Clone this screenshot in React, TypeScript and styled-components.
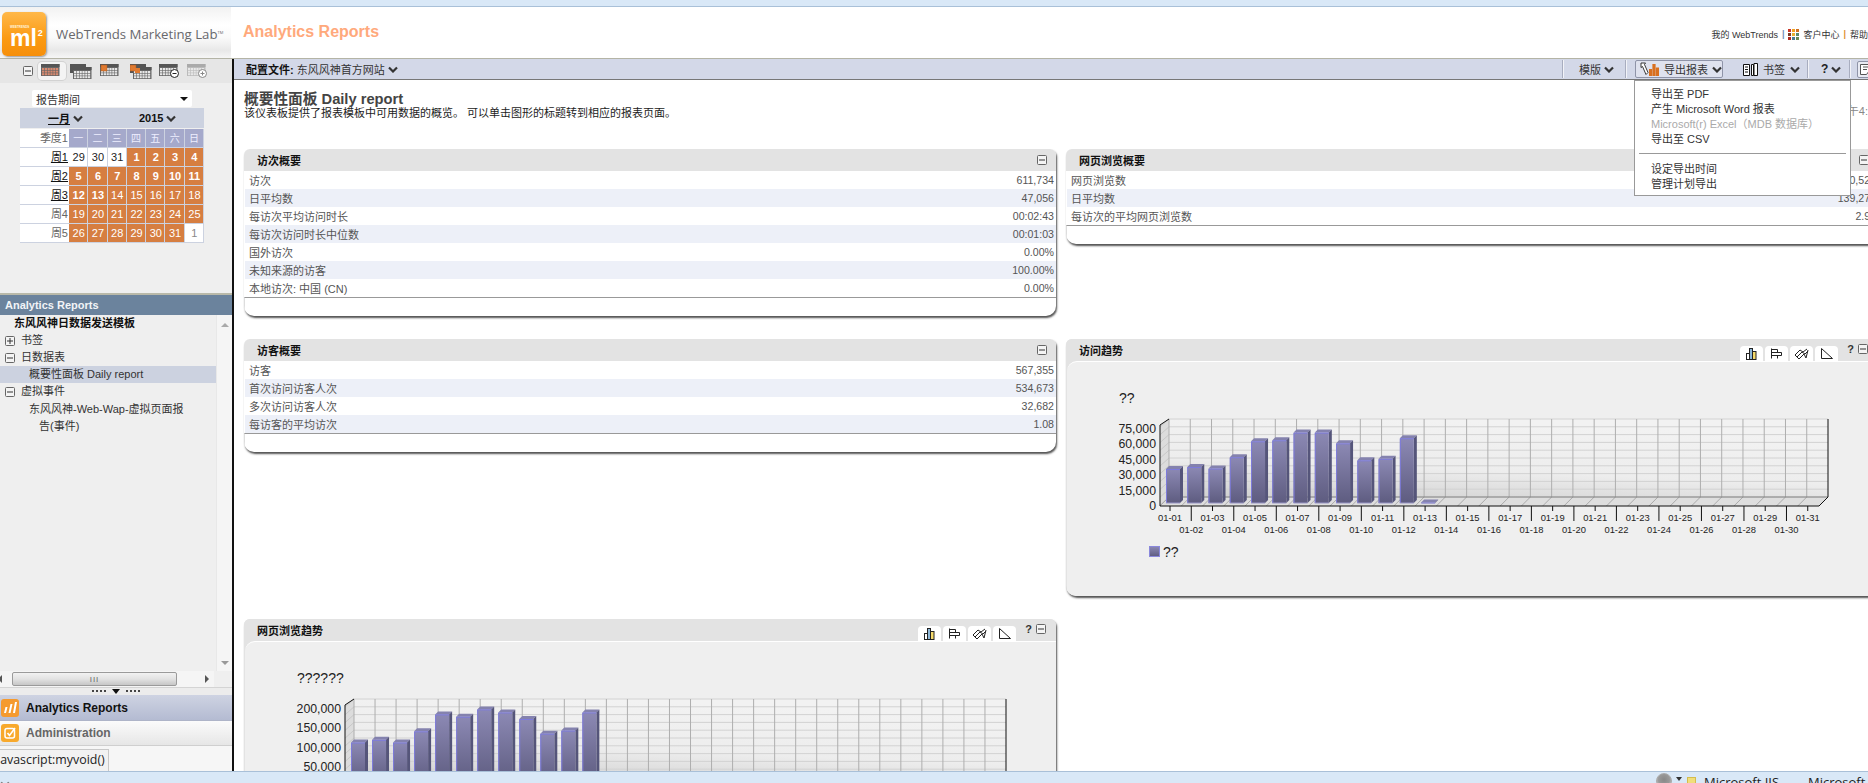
import React from "react";
import styled, { createGlobalStyle } from "styled-components";

const SANS = `"Liberation Sans", "Noto Sans CJK SC", sans-serif`;

const GlobalStyle = createGlobalStyle`
    html, body {
        margin: 0;
        height: 100%;
        overflow: hidden;
        background: #fff;
        font-family: ${SANS};
    }
`;

const Shell = styled.div`
    width: 1868px;
    height: 783px;
    display: flex;
    flex-direction: column;
    overflow: hidden;
`;
const TopStrip = styled.div`
    height: 6px;
    flex: none;
    background: #d9e8f7;
    border-bottom: 1px solid #a9c0d8;
`;
const Header = styled.header`
    height: 51px;
    flex: none;
    display: flex;
    align-items: center;
    border-bottom: 1px solid #b4b4a6;
`;
const LogoArea = styled.div`
    width: 231px;
    height: 100%;
    flex: none;
    display: flex;
    align-items: center;
    gap: 10px;
    padding: 2px 0 0 2px;
    box-sizing: border-box;
    background: linear-gradient(#f2f2f2 0, #fff 35%, #fafafa 60%, #e8e8e8 85%, #f6f6f6 100%);
`;
const LogoBadge = styled.div`
    width: 44px;
    height: 44px;
    flex: none;
    border-radius: 5px;
    background: linear-gradient(#ffb84a, #fb9a12 60%, #f68f0a);
    box-shadow: 1px 1px 2px #999;
    color: #fff;
    padding: 13px 0 0 8px;
    box-sizing: border-box;
`;
const LogoTiny = styled.div`
    font: bold 3px/4px ${SANS};
    color: #fff3dc;
`;
const LogoMark = styled.div`
    font: bold 23px/19px ${SANS};
    white-space: nowrap;
`;
const LogoSquared = styled.span`
    font: bold 9px/9px ${SANS};
    vertical-align: 10px;
    margin-left: 1px;
`;
const LogoWords = styled.div`
    font: 13.2px "Open Sans", sans-serif;
    color: #68686c;
    white-space: nowrap;
`;
const LogoTm = styled.span`
    font-size: 4px;
    vertical-align: 5px;
`;
const AppTitle = styled.h1`
    margin: 0 0 2px 12px;
    font: bold 16px ${SANS};
    color: #ffa97c;
`;
const HeaderLinks = styled.nav`
    margin-left: auto;
    display: flex;
    align-items: center;
    gap: 4px;
    font-size: 9px;
    color: #333;
    white-space: nowrap;
    padding-top: 3px;
`;
const LinkBar = styled.span<{ $color: string }>`
    color: ${(p) => p.$color};
    font-weight: bold;
`;

const Body = styled.div`
    flex: 1;
    min-height: 0;
    display: flex;
`;
const LeftPanel = styled.aside`
    position: relative;
    width: 232px;
    flex: none;
    display: flex;
    flex-direction: column;
    background: #efefef;
    border-right: 2px solid #111;
`;
const CalTools = styled.div`
    height: 24px;
    flex: none;
    display: flex;
    align-items: center;
    padding-left: 23px;
    background: #e6e6e6;
`;
const CalToolSlot = styled.span<{ $active?: boolean; $width: number }>`
    width: ${(p) => p.$width}px;
    height: 18px;
    flex: none;
    display: flex;
    align-items: center;
    justify-content: center;
    border-radius: 4px;
    &:first-of-type {
        margin-left: 5px;
    }
    ${(p) => p.$active && "background: #f4f4f4; box-shadow: 0 0 0 1px #d2d2d2;"}
`;
const PeriodSelect = styled.div`
    width: 160px;
    height: 17px;
    margin: 7px 0 0 32px;
    padding: 0 4px;
    box-sizing: border-box;
    display: flex;
    align-items: center;
    justify-content: space-between;
    background: #fff;
    border-radius: 2px;
    font-size: 11px;
    color: #333;
    flex: none;
`;
const SelectCaret = styled.span`
    border: 4px solid transparent;
    border-top: 4px solid #111;
    border-bottom: 0;
`;
const MonthBar = styled.div`
    width: 184px;
    height: 20px;
    margin: 1px 0 0 20px;
    flex: none;
    display: grid;
    grid-template-columns: 119px 1fr;
    align-items: center;
    background: #ccd2e0;
    font-size: 11px;
    font-weight: bold;
    color: #111;
`;
const MonthCell = styled.span<{ $left: number }>`
    display: flex;
    align-items: center;
    gap: 3px;
    padding-left: ${(p) => p.$left}px;
`;
const MonthName = styled.span`
    text-decoration: underline;
`;
const CalGrid = styled.div`
    width: 184px;
    margin: 1px 0 0 20px;
    flex: none;
    display: grid;
    grid-template-columns: 49px repeat(7, 19.3px);
    grid-auto-rows: 19px;
    background: #ccd2e0;
`;
const WeekLabel = styled.span<{ $link?: boolean }>`
    background: #fff;
    border-bottom: 1px solid #ccd2e0;
    box-sizing: border-box;
    font-size: 11px;
    line-height: 19px;
    text-align: right;
    padding-right: 1px;
    color: ${(p) => (p.$link ? "#111" : "#666")};
    text-decoration: ${(p) => (p.$link ? "underline" : "none")};
`;
const WeekDay = styled.span`
    background: #a5a9cb;
    border-right: 1px solid #ccd2e0;
    border-bottom: 1px solid #ccd2e0;
    box-sizing: border-box;
    color: #eef;
    font-size: 10px;
    line-height: 19px;
    text-align: center;
`;
const DayCell = styled.span<{ $kind: "in" | "strong" | "out" | "faint" }>`
    background: ${(p) => (p.$kind === "in" || p.$kind === "strong" ? "#d67e41" : "#fff")};
    color: ${(p) =>
        p.$kind === "out" ? "#222" : p.$kind === "faint" ? "#888" : "#fff"};
    font-weight: ${(p) => (p.$kind === "strong" ? "bold" : "normal")};
    border-right: 1px solid #ccd2e0;
    border-bottom: 1px solid #ccd2e0;
    box-sizing: border-box;
    font-size: 11px;
    line-height: 19px;
    text-align: center;
    padding-left: 1px;
`;
const PanelHeading = styled.div`
    margin-top: 50px;
    height: 20px;
    flex: none;
    border-top: 2px solid #b9b9a9;
    background: #6b839d;
    color: #f2f4f7;
    font-size: 11px;
    font-weight: bold;
    line-height: 20px;
    padding-left: 5px;
`;
const TreeBox = styled.div`
    flex: 1;
    min-height: 0;
    display: flex;
`;
const TreeList = styled.div`
    flex: 1;
    font-size: 11px;
    line-height: 17px;
    color: #333;
`;
const TreeRow = styled.div<{ $indent: number; $selected?: boolean; $bold?: boolean }>`
    height: 17px;
    display: flex;
    align-items: center;
    gap: 6px;
    padding-left: ${(p) => p.$indent}px;
    background: ${(p) => (p.$selected ? "#ccd2e0" : "transparent")};
    font-weight: ${(p) => (p.$bold ? "bold" : "normal")};
    color: ${(p) => (p.$bold ? "#111" : "#333")};
`;
const TreeWrapRow = styled.div`
    padding: 1px 25px 0 39px;
    text-indent: -10px;
`;
const VScroll = styled.div`
    width: 16px;
    flex: none;
    display: flex;
    flex-direction: column;
    align-items: center;
    justify-content: space-between;
    padding: 8px 0 6px;
    box-sizing: border-box;
    background: #f5f5f5;
    border-left: 1px solid #e8e8e8;
`;
const ArrowUp = styled.span`
    border: 4px solid transparent;
    border-bottom: 4px solid #aaa;
    border-top: 0;
`;
const ArrowDown = styled.span`
    border: 4px solid transparent;
    border-top: 4px solid #999;
    border-bottom: 0;
`;
const HScroll = styled.div`
    height: 16px;
    flex: none;
    width: 214px;
    display: flex;
    align-items: center;
    background: #f5f5f5;
`;
const ArrowLeft = styled.span`
    border: 4px solid transparent;
    border-right: 4px solid #555;
    border-left: 0;
    margin-left: -2px;
`;
const ArrowRight = styled.span`
    border: 4px solid transparent;
    border-left: 4px solid #555;
    border-right: 0;
    margin-left: 28px;
`;
const HThumb = styled.div`
    width: 165px;
    height: 14px;
    margin-left: 10px;
    box-sizing: border-box;
    display: flex;
    align-items: center;
    justify-content: center;
    border: 1px solid #9a9a9a;
    border-radius: 2px;
    background: linear-gradient(#f2f2f2, #e2e2e2 50%, #c6c6c6);
    color: #666;
    font-size: 8px;
    letter-spacing: 1px;
`;
const Resizer = styled.div`
    height: 8px;
    flex: none;
    display: flex;
    align-items: center;
    justify-content: center;
    gap: 6px;
    background: #ececec;
    border-top: 1px solid #d4d4d4;
    box-sizing: border-box;
`;
const GripDots = styled.span`
    width: 14px;
    height: 1px;
    border-top: 2px dotted #444;
`;
const ResizeCaret = styled.span`
    border: 4px solid transparent;
    border-top: 5px solid #111;
    border-bottom: 0;
`;
const NavTab = styled.div<{ $active?: boolean }>`
    height: ${(p) => (p.$active ? 26 : 25)}px;
    flex: none;
    display: flex;
    align-items: center;
    gap: 7px;
    padding-left: 1px;
    box-sizing: border-box;
    border-bottom: 1px solid ${(p) => (p.$active ? "#aeb4c8" : "#cfcfcf")};
    background: ${(p) =>
        p.$active
            ? "linear-gradient(#ced3e2, #b4bbd2)"
            : "linear-gradient(#fbfbfb, #e6e6e6)"};
    font-size: 12px;
    font-weight: bold;
    color: ${(p) => (p.$active ? "#111" : "#666")};
`;
const NavFiller = styled.div`
    height: 25px;
    flex: none;
    background: #f6f6f6;
`;
const StatusTip = styled.div`
    position: absolute;
    left: 0;
    bottom: 0;
    width: 109px;
    height: 22px;
    box-sizing: border-box;
    overflow: hidden;
    background: #f2f2f2;
    border: 1px solid #c8c8c8;
    border-left: 0;
    border-bottom: 0;
    font: 12.4px/20px "Open Sans", sans-serif;
    color: #222;
    white-space: nowrap;
    text-indent: -3px;
`;

const Main = styled.main`
    position: relative;
    flex: 1;
    min-width: 0;
    overflow: hidden;
`;
const Toolbar = styled.div`
    height: 20px;
    display: flex;
    align-items: center;
    background: #d3d8e8;
    border-bottom: 1px solid #777;
    font-size: 11px;
    color: #333;
    padding-left: 12px;
`;
const ProfileName = styled.b`
    color: #111;
    margin-right: 3px;
`;
const ToolRight = styled.div`
    margin-left: auto;
    display: flex;
    height: 100%;
    align-items: center;
`;
const ToolGroup = styled.div<{ $width: number; $pad: number }>`
    width: ${(p) => p.$width}px;
    height: 18px;
    box-sizing: border-box;
    display: flex;
    align-items: center;
    gap: 3px;
    padding-left: ${(p) => p.$pad}px;
    border-left: 1px solid #f2f3f8;
    box-shadow: -1px 0 0 #a8adbf;
`;
const ExportButton = styled.button`
    width: 88px;
    height: 18px;
    padding: 0 0 0 4px;
    display: flex;
    align-items: center;
    gap: 4px;
    font: 11px ${SANS};
    color: #333;
    background: #dfe2ee;
    border: 1px solid #8f94a8;
    border-radius: 2px;
    flex: none;
`;
const BookItem = styled.div`
    margin-left: 17px;
    display: flex;
    align-items: center;
    gap: 5px;
`;
const Help = styled.b`
    font-size: 12px;
    color: #222;
`;
const EdgeButton = styled.span`
    width: 22px;
    height: 17px;
    margin-left: -1px;
    padding: 2px 0 0 2px;
    flex: none;
    background: #e9ebf3;
    border: 1px solid #8f94a8;
    border-radius: 2px;
    box-sizing: border-box;
`;
const ExportMenu = styled.div`
    position: absolute;
    top: 21px;
    right: 17px;
    width: 217px;
    height: 116px;
    box-sizing: border-box;
    padding: 6px 4px 0;
    background: #fff;
    border: 1px solid #999;
    z-index: 5;
    font-size: 11px;
    line-height: 15px;
    color: #333;
`;
const MenuItem = styled.div<{ $disabled?: boolean }>`
    padding-left: 12px;
    color: ${(p) => (p.$disabled ? "#aaa" : "#333")};
`;
const MenuRule = styled.hr`
    margin: 6px 0 8px;
    border: 0;
    border-top: 1px solid #999;
`;
const Content = styled.div`
    padding: 11px 0 0 10px;
`;
const TitleRow = styled.div`
    display: flex;
    align-items: flex-end;
    justify-content: space-between;
`;
const TitleBlock = styled.div``;
const PageTitle = styled.h2`
    margin: 0;
    font: bold 14.7px/17px ${SANS};
    color: #444;
`;
const PageDesc = styled.p`
    margin: 0;
    font-size: 11px;
    line-height: 11px;
    color: #222;
`;
const ReportTime = styled.span`
    font-size: 11px;
    line-height: 11px;
    color: #888;
    margin-bottom: 2px;
`;
const CardGrid = styled.div`
    margin-top: 30px;
    display: grid;
    grid-template-columns: 812px 812px;
    column-gap: 10px;
    row-gap: 23px;
    align-items: start;
`;
const Card = styled.section`
    border-radius: 6px 6px 10px 10px;
    background: #fff;
    box-shadow: 1px 2px 2px rgba(40, 40, 40, 0.8);
    overflow: hidden;
`;
const CardHead = styled.div`
    height: 22px;
    display: flex;
    align-items: center;
    padding: 0 9px 0 13px;
    background: #e3e3e3;
    font-size: 11px;
    font-weight: bold;
    color: #111;
`;
const CardHeadEnd = styled.span`
    margin-left: auto;
    display: flex;
    align-items: center;
`;
const DataRow = styled.div<{ $alt: boolean }>`
    height: 18px;
    display: flex;
    align-items: center;
    justify-content: space-between;
    padding: 0 2px 0 4px;
    margin-left: 1px;
    background: ${(p) => (p.$alt ? "#edf0f8" : "#fff")};
    font-size: 11px;
    color: #555;
`;
const DataValue = styled.span`
    font-size: 10.6px;
`;
const CardFoot = styled.div`
    height: 18px;
    border-top: 1px solid #999;
    border-left: 1px solid #ddd;
`;
const ChartCard = styled(Card)`
    background: #e3e3e3;
`;
const ChartHeadEnd = styled.span`
    margin-left: auto;
    align-self: stretch;
    display: flex;
    align-items: flex-end;
    gap: 2px;
    padding-top: 7px;
    box-sizing: border-box;
`;
const ChartTab = styled.span`
    width: 23px;
    height: 15px;
    display: flex;
    align-items: center;
    justify-content: center;
    background: #fff;
    border-radius: 4px 4px 0 0;
`;
const ChartHelp = styled.span`
    align-self: flex-start;
    margin: -3px 1px 0 7px;
    display: flex;
    align-items: center;
    gap: 4px;
    font-size: 11px;
    color: #333;
`;
const ChartBody = styled.div<{ $height: number }>`
    height: ${(p) => p.$height}px;
    background: #efefef;
    border-top: 1px solid #fff;
    box-sizing: border-box;
    border-radius: 10px 0 0 0;
    margin-left: 1px;
`;
const ChartSvg = styled.svg`
    display: block;
    margin-top: -1px;
`;
const ChartCaption = styled.text`
    font: 14px ${SANS};
    fill: #222;
`;
const AxisLabel = styled.text`
    font: 12.3px ${SANS};
    fill: #222;
    text-anchor: end;
`;
const DateLabel = styled.text`
    font: 9.4px ${SANS};
    fill: #222;
    text-anchor: middle;
`;
const BottomBar = styled.footer`
    position: relative;
    height: 12px;
    flex: none;
    overflow: hidden;
    box-sizing: border-box;
    border-top: 1px solid #a9c0d8;
    background: #d9e8f7;
    display: flex;
    font: 13px/16px "Open Sans", sans-serif;
    color: #222;
`;
const BarLead = styled.span`
    padding-top: 3px;
`;
const BarRight = styled.div`
    margin-left: auto;
    display: flex;
    align-items: flex-start;
`;
const BarGlobe = styled.span`
    width: 16px;
    height: 16px;
    border-radius: 50%;
    background: radial-gradient(circle at 50% 40%, #888, #999 50%, #ddd);
    border: 1px solid #aaa;
    box-sizing: border-box;
    margin-top: 1px;
`;
const BarCaret = styled.span`
    margin: 5px 5px 0 4px;
    border: 3px solid transparent;
    border-top: 4px solid #333;
    border-bottom: 0;
`;
const BarNote = styled.span`
    width: 9px;
    height: 10px;
    margin-top: 5px;
    background: #f0de7a;
    border: 1px solid #d4bc4e;
    box-sizing: border-box;
`;
const BarItem = styled.span<{ $left: number; $width: number }>`
    margin-left: ${(p) => p.$left}px;
    width: ${(p) => p.$width}px;
    margin-top: 2px;
    white-space: nowrap;
`;

const Chevron = ({ color = "#333" }: { color?: string }) => (
    <svg width="10" height="7" viewBox="0 0 10 7">
        <polyline points="1,1.5 5,5.5 9,1.5" fill="none" stroke={color} strokeWidth="2.2" />
    </svg>
);

const BoxIcon = ({ plus }: { plus?: boolean }) => (
    <svg width="10" height="10" viewBox="0 0 10 10">
        <rect x="0.5" y="0.5" width="9" height="9" rx="1" fill="#f4f4f4" stroke="#666" />
        <line x1="2" y1="5" x2="8" y2="5" stroke="#333" />
        {plus && <line x1="5" y1="2" x2="5" y2="8" stroke="#333" />}
    </svg>
);

const CalIcon = ({
    cells = "#e8e8e8",
    back,
    flag,
    badge,
    faded
}: {
    cells?: string;
    back?: boolean;
    flag?: number;
    badge?: "minus" | "plus";
    faded?: boolean;
}) => {
    const top = faded ? "#aaa" : "#555";
    const ox = back ? 3 : 0;
    const oy = back ? 3 : 0;
    const squares = [];
    for (let r = 0; r < 3; r++) {
        for (let c = 0; c < 6; c++) {
            squares.push(
                <rect key={`${r}-${c}`} x={ox + 1 + c * 2.8} y={oy + 4 + r * 2.6} width="2.2" height="2" fill={cells} />
            );
        }
    }
    return (
        <svg width="22" height="15" viewBox="0 0 22 15">
            {back && <rect x="0" y="0" width="16" height="9" fill={top} />}
            <rect x={ox} y={oy} width="18.5" height="12" fill={faded ? "#bbb" : "#666"} />
            <rect x={ox} y={oy} width="18.5" height="3" fill={top} />
            {squares}
            {flag !== undefined && <rect x={flag} y="1" width="6" height="6" fill="#e07a30" stroke="#a85a20" strokeWidth="0.5" />}
            {back && flag !== undefined && <rect x={flag + 5} y="4" width="5" height="5" fill="#e07a30" />}
            {badge && (
                <g>
                    <circle cx="15.5" cy="9.5" r="4" fill="#fff" stroke={badge === "minus" ? "#222" : "#888"} />
                    <line x1="13.5" y1="9.5" x2="17.5" y2="9.5" stroke={badge === "minus" ? "#222" : "#888"} />
                    {badge === "plus" && <line x1="15.5" y1="7.5" x2="15.5" y2="11.5" stroke="#888" />}
                </g>
            )}
        </svg>
    );
};

const ReportsIcon = () => (
    <svg width="18" height="18" viewBox="0 0 18 18">
        <rect width="18" height="18" rx="3" fill="#f59a2e" />
        <path d="M3 14l1.5-6h2L5 14zM7.5 14L9.5 5h2l-2 9zM12 14l2-11h2l-2 11z" fill="#fff" />
    </svg>
);

const AdminIcon = () => (
    <svg width="18" height="18" viewBox="0 0 18 18">
        <rect width="18" height="18" rx="3" fill="#f8a92c" />
        <rect x="4" y="4.5" width="9.5" height="9.5" rx="2" fill="none" stroke="#fff" strokeWidth="1.5" />
        <polyline points="6.5,9 8.5,11.5 14,4" fill="none" stroke="#fff" strokeWidth="1.6" />
    </svg>
);

const ExportIcon = () => (
    <svg width="20" height="14" viewBox="0 0 20 14">
        <path d="M1 1h4.5l-1 1.5 3.5 8-2 2-3.5-8-1.5 1z" fill="#fff" stroke="#222" strokeWidth="0.9" />
        <rect x="9" y="7" width="3.2" height="7" fill="#d9701f" />
        <rect x="12.4" y="2" width="3.2" height="12" fill="#d9701f" />
        <rect x="15.8" y="5.5" width="3.2" height="8.5" fill="#d9701f" />
    </svg>
);

const BookIcon = () => (
    <svg width="15" height="13" viewBox="0 0 15 13">
        <path d="M.5 1.5h6v11h-6zM8.5 1.5h2v11h-2zM11 .5h3.5v12H11z" fill="#fff" stroke="#111" />
        <path d="M2 4h3M2 6.5h3M2 9h3" stroke="#111" />
    </svg>
);

const EdgeIcon = () => (
    <svg width="10" height="11" viewBox="0 0 10 11">
        <path d="M.5.5h9v6l-3 4h-6z" fill="#fff" stroke="#555" />
        <path d="M3 3h6M3 5.5h4" stroke="#555" />
    </svg>
);

const GridLogo = () => {
    const colors = ["#c8382a", "#f0a020", "#d07020", "#7a3a2a", "#e8b030", "#5a8a70", "#b02a20", "#4a7a90", "#6a8a50"];
    return (
        <svg width="11" height="11" viewBox="0 0 11 11">
            {colors.map((fill, i) => (
                <rect key={fill} x={(i % 3) * 4} y={Math.floor(i / 3) * 4} width="3" height="3" fill={fill} />
            ))}
        </svg>
    );
};

const TabBars = () => (
    <svg width="11" height="12" viewBox="0 0 11 12">
        <rect x=".5" y="5.5" width="3" height="6" fill="#fff" stroke="#222" />
        <rect x="3.5" y=".5" width="3" height="11" fill="#8fb8d8" stroke="#222" />
        <rect x="6.5" y="3.5" width="3.5" height="8" fill="#f4d96a" stroke="#222" />
    </svg>
);
const TabHBars = () => (
    <svg width="11" height="11" viewBox="0 0 11 11">
        <path d="M.5.5v10M.5 1.5h6v3h-6M.5 4.5h10v3H.5M.5 7.5h6v3" fill="none" stroke="#222" />
    </svg>
);
const TabWave = () => (
    <svg width="15" height="12" viewBox="0 0 15 12">
        <path d="M1 7l5-5 3 2 4-3M3 9l5-5 3 2 3-3M5 11l5-5 2 4 2-8M1 7l4 4" fill="none" stroke="#222" />
    </svg>
);
const TabArea = () => (
    <svg width="12" height="11" viewBox="0 0 12 11">
        <path d="M.5.5v10h11z" fill="#fff" stroke="#222" />
    </svg>
);

const ChartTabs = () => (
    <ChartHeadEnd>
        <ChartTab><TabBars /></ChartTab>
        <ChartTab><TabHBars /></ChartTab>
        <ChartTab><TabWave /></ChartTab>
        <ChartTab><TabArea /></ChartTab>
        <ChartHelp><b>?</b><BoxIcon /></ChartHelp>
    </ChartHeadEnd>
);

const RIGHT_WALL = 761;
const WALL_TOP = 58;
const WALL_BOTTOM = 136;
const FRONT_BOTTOM = 145;

type TrendProps = {
    id: string;
    caption: string;
    axisX: number;
    axisLabels: string[];
    max: number;
    values: number[];
    legend?: string;
    height: number;
};

const TrendChart = ({ id, caption, axisX, axisLabels, max, values, legend, height }: TrendProps) => {
    const backLeft = axisX + 9;
    const frontRight = RIGHT_WALL - 9;
    const step = (RIGHT_WALL - backLeft) / 31;
    const labelStep = 77 / (axisLabels.length - 1);
    const grid = Array.from({ length: 11 }, (_, i) => WALL_TOP + i * 7.8);
    const days = Array.from({ length: 31 }, (_, i) => i);
    return (
        <ChartSvg width="810" height={height}>
            <defs>
                <linearGradient id={`${id}-wall`} x1="0" y1="1" x2="0.35" y2="0">
                    <stop offset="0" stopColor="#cfcfcf" />
                    <stop offset="0.45" stopColor="#ededed" />
                    <stop offset="1" stopColor="#f2f2f2" />
                </linearGradient>
                <linearGradient id={`${id}-bar`} x1="0" y1="0" x2="0" y2="1">
                    <stop offset="0" stopColor="#8c89b4" />
                    <stop offset="1" stopColor="#5e5c80" />
                </linearGradient>
            </defs>
            <ChartCaption x="52" y="42">{caption}</ChartCaption>
            <polygon
                points={`${axisX},${WALL_TOP + 6} ${backLeft},${WALL_TOP} ${backLeft},${WALL_BOTTOM} ${axisX},${FRONT_BOTTOM}`}
                fill="#dcdcdc"
            />
            <rect x={backLeft} y={WALL_TOP} width={RIGHT_WALL - backLeft} height={WALL_BOTTOM - WALL_TOP} fill={`url(#${id}-wall)`} />
            <polygon
                points={`${axisX},${FRONT_BOTTOM} ${backLeft},${WALL_BOTTOM} ${RIGHT_WALL},${WALL_BOTTOM} ${frontRight},${FRONT_BOTTOM}`}
                fill="#dedede"
            />
            {grid.map((y) => (
                <g key={y}>
                    <line x1={backLeft} y1={y} x2={RIGHT_WALL} y2={y} stroke="#d2d2d2" />
                    <line x1={axisX} y1={y + 8} x2={backLeft} y2={y} stroke="#c8c8c8" />
                </g>
            ))}
            {days.map((k) => (
                <g key={k}>
                    <line x1={backLeft + k * step} y1={WALL_TOP} x2={backLeft + k * step} y2={WALL_BOTTOM} stroke="#aeaeae" />
                    <line
                        x1={axisX + k * step}
                        y1={FRONT_BOTTOM}
                        x2={backLeft + k * step}
                        y2={WALL_BOTTOM}
                        stroke="#aaa"
                    />
                </g>
            ))}
            <line x1={backLeft} y1={WALL_BOTTOM} x2={RIGHT_WALL} y2={WALL_BOTTOM} stroke="#808080" />
            {values.map((v, k) => {
                const x = axisX + 6 + k * step;
                const top = FRONT_BOTTOM - (v / max) * 77;
                return (
                    <g key={k}>
                        <polygon points={`${x},${top} ${x + 3},${top - 3} ${x + 17},${top - 3} ${x + 14},${top}`} fill="#8482ae" />
                        <polygon points={`${x + 14},${top} ${x + 17},${top - 3} ${x + 17},139 ${x + 14},142`} fill="#55557a" />
                        <rect x={x} y={top} width="14" height={142 - top} fill={`url(#${id}-bar)`} />
                        <path d={`M${x + 0.5} 142V${top + 0.5}H${x + 14}`} fill="none" stroke="#7d7bdc" />
                        <line x1={x} y1="142" x2={x + 14} y2="142" stroke="#9a98c8" />
                    </g>
                );
            })}
            <path
                d={`M${backLeft} ${WALL_TOP}L${axisX} ${WALL_TOP + 6}V${FRONT_BOTTOM}H${frontRight}L${RIGHT_WALL} ${WALL_BOTTOM}V${WALL_TOP}`}
                fill="none"
                stroke="#111"
            />
            {axisLabels.map((label, i) => (
                <AxisLabel key={label} x={axisX - 4} y={FRONT_BOTTOM - (axisLabels.length - 1 - i) * labelStep + 4}>
                    {label}
                </AxisLabel>
            ))}
            {days.map((k) => {
                const x = axisX + 10 + k * step;
                const even = k % 2 === 0;
                return (
                    <g key={k}>
                        <line x1={x} y1={FRONT_BOTTOM} x2={x} y2={even ? 150 : 160} stroke="#111" />
                        <DateLabel x={x} y={even ? 160 : 172}>
                            {`01-${String(k + 1).padStart(2, "0")}`}
                        </DateLabel>
                    </g>
                );
            })}
            {legend && (
                <g>
                    <rect x={axisX - 10.5} y="185.5" width="10" height="10" fill={`url(#${id}-bar)`} stroke="#8a88dc" />
                    <ChartCaption x={axisX + 3} y="196">{legend}</ChartCaption>
                </g>
            )}
        </ChartSvg>
    );
};

const VISITS = [
    ["访次", "611,734"],
    ["日平均数", "47,056"],
    ["每访次平均访问时长", "00:02:43"],
    ["每访次访问时长中位数", "00:01:03"],
    ["国外访次", "0.00%"],
    ["未知来源的访客", "100.00%"],
    ["本地访次: 中国 (CN)", "0.00%"]
];
const PAGE_VIEWS = [
    ["网页浏览数", "1,810,523"],
    ["日平均数", "139,271"],
    ["每访次的平均网页浏览数", "2.96"]
];
const VISITORS = [
    ["访客", "567,355"],
    ["首次访问访客人次", "534,673"],
    ["多次访问访客人次", "32,682"],
    ["每访客的平均访次", "1.08"]
];
const VISIT_TREND = [36000, 38000, 36500, 47500, 63000, 64000, 71500, 71500, 61000, 44500, 46000, 66000, 3500];
const VIEW_TREND = [113000, 120000, 113000, 142000, 186000, 180000, 199000, 191000, 174000, 136000, 144000, 191000];
const WEEKDAYS = ["一", "二", "三", "四", "五", "六", "日"];
const WEEKS: [string, boolean, number[]][] = [
    ["周1", true, [29, 30, 31, 1, 2, 3, 4]],
    ["周2", true, [5, 6, 7, 8, 9, 10, 11]],
    ["周3", true, [12, 13, 14, 15, 16, 17, 18]],
    ["周4", false, [19, 20, 21, 22, 23, 24, 25]],
    ["周5", false, [26, 27, 28, 29, 30, 31, 1]]
];

const dayKind = (week: number, i: number, d: number) => {
    if (week === 0 && i < 3) return "out";
    if (week === 4 && i === 6) return "faint";
    return week < 3 && d <= 13 ? "strong" : "in";
};

const SummaryCard = ({ title, rows }: { title: string; rows: string[][] }) => (
    <Card>
        <CardHead>
            {title}
            <CardHeadEnd><BoxIcon /></CardHeadEnd>
        </CardHead>
        {rows.map(([name, value], i) => (
            <DataRow key={name} $alt={i % 2 === 1}>
                <span>{name}</span>
                <DataValue>{value}</DataValue>
            </DataRow>
        ))}
        <CardFoot />
    </Card>
);

export default function App() {
    return (
        <Shell>
            <GlobalStyle />
            <TopStrip />
            <Header>
                <LogoArea>
                    <LogoBadge>
                        <LogoTiny>WEBTRENDS</LogoTiny>
                        <LogoMark>ml<LogoSquared>2</LogoSquared></LogoMark>
                    </LogoBadge>
                    <LogoWords>WebTrends Marketing Lab<LogoTm>TM</LogoTm></LogoWords>
                </LogoArea>
                <AppTitle>Analytics Reports</AppTitle>
                <HeaderLinks>
                    我的 WebTrends <LinkBar $color="#6f8fb8">|</LinkBar>
                    <GridLogo /> 客户中心 <LinkBar $color="#e09030">|</LinkBar> 帮助
                </HeaderLinks>
            </Header>
            <Body>
                <LeftPanel>
                    <CalTools>
                        <BoxIcon />
                        <CalToolSlot $width={28} $active><CalIcon cells="#d98a70" /></CalToolSlot>
                        <CalToolSlot $width={30}><CalIcon back /></CalToolSlot>
                        <CalToolSlot $width={30}><CalIcon flag={1} /></CalToolSlot>
                        <CalToolSlot $width={30}><CalIcon back flag={0} /></CalToolSlot>
                        <CalToolSlot $width={28}><CalIcon badge="minus" /></CalToolSlot>
                        <CalToolSlot $width={28}><CalIcon faded badge="plus" /></CalToolSlot>
                    </CalTools>
                    <PeriodSelect>
                        报告期间
                        <SelectCaret />
                    </PeriodSelect>
                    <MonthBar>
                        <MonthCell $left={28}><MonthName>一月</MonthName><Chevron /></MonthCell>
                        <MonthCell $left={0}>2015<Chevron /></MonthCell>
                    </MonthBar>
                    <CalGrid>
                        <WeekLabel>季度1</WeekLabel>
                        {WEEKDAYS.map((d) => <WeekDay key={d}>{d}</WeekDay>)}
                        {WEEKS.map(([label, link, days], w) => (
                            <React.Fragment key={label}>
                                <WeekLabel $link={link}>{label}</WeekLabel>
                                {days.map((d, i) => (
                                    <DayCell key={`${label}-${i}`} $kind={dayKind(w, i, d)}>{d}</DayCell>
                                ))}
                            </React.Fragment>
                        ))}
                    </CalGrid>
                    <PanelHeading>Analytics Reports</PanelHeading>
                    <TreeBox>
                        <TreeList>
                            <TreeRow $indent={14} $bold>东风风神日数据发送模板</TreeRow>
                            <TreeRow $indent={5}><BoxIcon plus />书签</TreeRow>
                            <TreeRow $indent={5}><BoxIcon />日数据表</TreeRow>
                            <TreeRow $indent={29} $selected>概要性面板 Daily report</TreeRow>
                            <TreeRow $indent={5}><BoxIcon />虚拟事件</TreeRow>
                            <TreeWrapRow>东风风神-Web-Wap-虚拟页面报告(事件)</TreeWrapRow>
                        </TreeList>
                        <VScroll>
                            <ArrowUp />
                            <ArrowDown />
                        </VScroll>
                    </TreeBox>
                    <HScroll>
                        <ArrowLeft />
                        <HThumb>III</HThumb>
                        <ArrowRight />
                    </HScroll>
                    <Resizer>
                        <GripDots />
                        <ResizeCaret />
                        <GripDots />
                    </Resizer>
                    <NavTab $active><ReportsIcon />Analytics Reports</NavTab>
                    <NavTab><AdminIcon />Administration</NavTab>
                    <NavFiller />
                    <StatusTip>javascript:myvoid()</StatusTip>
                </LeftPanel>
                <Main>
                    <Toolbar>
                        <ProfileName>配置文件:</ProfileName>
                        东风风神首方网站&nbsp;
                        <Chevron />
                        <ToolRight>
                            <ToolGroup $width={63} $pad={15}>模版 <Chevron /></ToolGroup>
                            <ToolGroup $width={182} $pad={8}>
                                <ExportButton><ExportIcon />导出报表<Chevron /></ExportButton>
                                <BookItem><BookIcon />书签 <Chevron /></BookItem>
                            </ToolGroup>
                            <ToolGroup $width={42} $pad={12}><Help>?</Help><Chevron /></ToolGroup>
                            <ToolGroup $width={18} $pad={7}><EdgeButton><EdgeIcon /></EdgeButton></ToolGroup>
                        </ToolRight>
                    </Toolbar>
                    <ExportMenu>
                        <MenuItem>导出至 PDF</MenuItem>
                        <MenuItem>产生 Microsoft Word 报表</MenuItem>
                        <MenuItem $disabled>Microsoft(r) Excel（MDB 数据库）</MenuItem>
                        <MenuItem>导出至 CSV</MenuItem>
                        <MenuRule />
                        <MenuItem>设定导出时间</MenuItem>
                        <MenuItem>管理计划导出</MenuItem>
                    </ExportMenu>
                    <Content>
                        <TitleRow>
                            <TitleBlock>
                                <PageTitle>概要性面板 Daily report</PageTitle>
                                <PageDesc>该仪表板提供了报表模板中可用数据的概览。 可以单击图形的标题转到相应的报表页面。</PageDesc>
                            </TitleBlock>
                            <ReportTime>下午4:</ReportTime>
                        </TitleRow>
                        <CardGrid>
                            <SummaryCard title="访次概要" rows={VISITS} />
                            <SummaryCard title="网页浏览概要" rows={PAGE_VIEWS} />
                            <SummaryCard title="访客概要" rows={VISITORS} />
                            <ChartCard>
                                <CardHead>访问趋势<ChartTabs /></CardHead>
                                <ChartBody $height={235}>
                                    <TrendChart
                                        id="visits"
                                        caption="??"
                                        axisX={93}
                                        axisLabels={["75,000", "60,000", "45,000", "30,000", "15,000", "0"]}
                                        max={75000}
                                        values={VISIT_TREND}
                                        legend="??"
                                        height={234}
                                    />
                                </ChartBody>
                            </ChartCard>
                            <ChartCard>
                                <CardHead>网页浏览趋势<ChartTabs /></CardHead>
                                <ChartBody $height={235}>
                                    <TrendChart
                                        id="views"
                                        caption="??????"
                                        axisX={100}
                                        axisLabels={["200,000", "150,000", "100,000", "50,000", "0"]}
                                        max={200000}
                                        values={VIEW_TREND}
                                        height={234}
                                    />
                                </ChartBody>
                            </ChartCard>
                        </CardGrid>
                    </Content>
                </Main>
            </Body>
            <BottomBar>
                <BarLead><Chevron color="#777" /></BarLead>
                <BarRight>
                    <BarGlobe />
                    <BarCaret />
                    <BarNote />
                    <BarItem $left={8} $width={104}>Microsoft IIS</BarItem>
                    <BarItem $left={0} $width={60}>Microsoft</BarItem>
                </BarRight>
            </BottomBar>
        </Shell>
    );
}
